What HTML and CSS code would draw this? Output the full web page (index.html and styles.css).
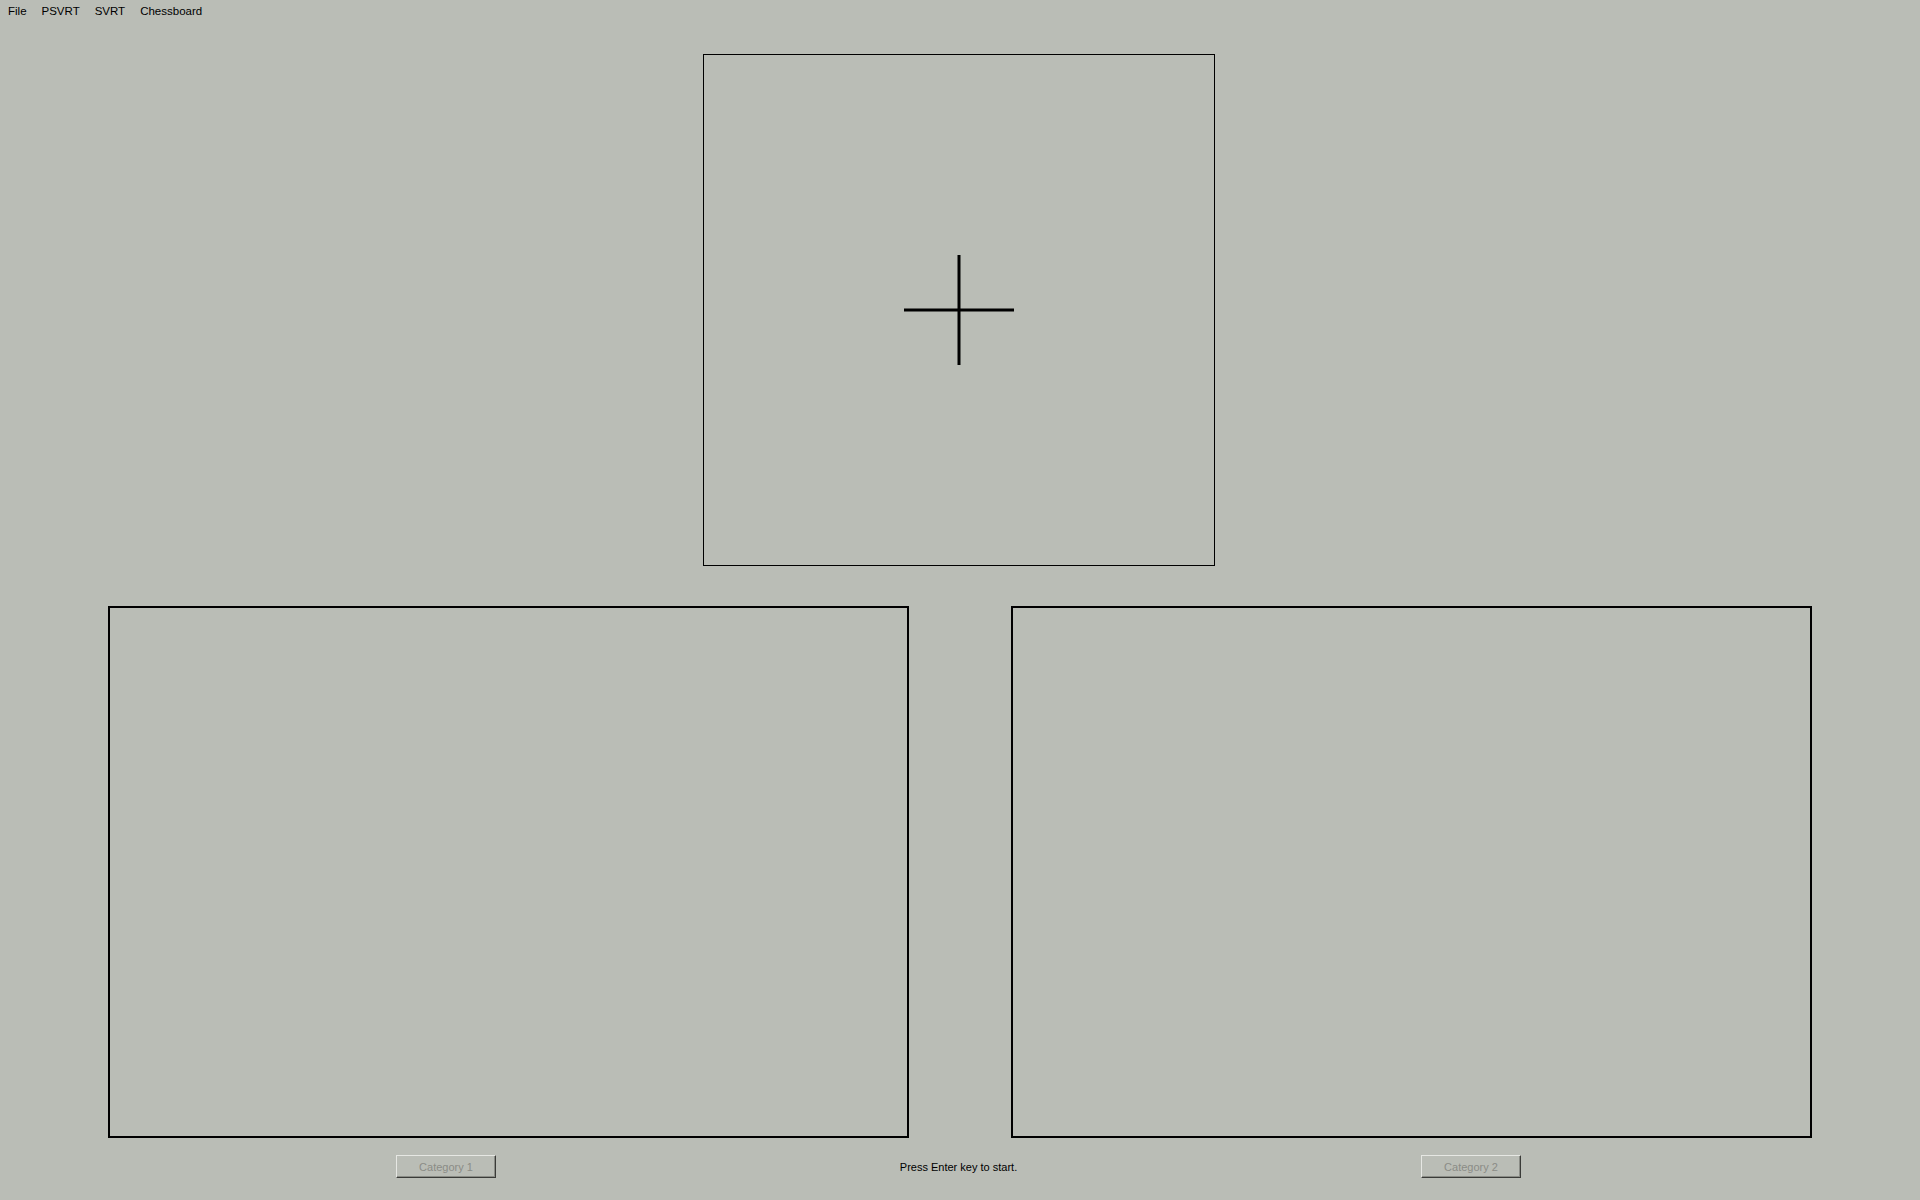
FILE: index.html
```html
<!DOCTYPE html>
<html>
  <head>
    <title>Categorization</title>
    <link rel="stylesheet" href="styles.css">
  </head>
  <body>
    <div class="menubar">
      <span class="menu-item">File</span>
      <span class="menu-item">PSVRT</span>
      <span class="menu-item">SVRT</span>
      <span class="menu-item">Chessboard</span>
    </div>

    <div class="stimulus-row">
      <div class="stimulus">
        <svg class="fixation" width="110" height="110" viewBox="0 0 110 110">
          <line x1="0" y1="55" x2="110" y2="55" stroke="#000" stroke-width="3" />
          <line x1="55" y1="0" x2="55" y2="110" stroke="#000" stroke-width="3" />
        </svg>
      </div>
    </div>

    <div class="examples-row">
      <div class="examples"></div>
      <div class="examples"></div>
    </div>

    <div class="controls">
      <button class="category" disabled>Category 1</button>
      <span class="status">Press Enter key to start.</span>
      <button class="category" disabled>Category 2</button>
    </div>
  </body>
</html>
```

FILE: styles.css
```css
body {
  margin: 0;
  background-color: #babdb6;
  font-family: "Liberation Sans", Arial, sans-serif;
  font-size: 11px;
  color: #000;
  height: 1200px;
  overflow: hidden;
}
.menubar {
  display: flex;
  height: 20px;
  align-items: center;
  padding-left: 8px;
  padding-top: 1px;
  gap: 15px;
  font-size: 11.5px;
}
.menu-item {
  line-height: 20px;
}
.stimulus-row {
  display: flex;
  justify-content: center;
  margin-top: 33px;
  padding-right: 2px;
}
.stimulus {
  width: 510px;
  height: 510px;
  border: 1px solid #000;
  display: flex;
  align-items: center;
  justify-content: center;
}
.fixation {
  display: block;
  margin-left: -1px;
}
.examples-row {
  display: flex;
  gap: 102px;
  padding: 0 108px;
  margin-top: 40px;
}
.examples {
  width: 797px;
  height: 528px;
  border: 2px solid #000;
}
.controls {
  display: flex;
  justify-content: space-between;
  align-items: center;
  padding: 0 399px 0 396px;
  margin-top: 17px;
}
.category {
  width: 100px;
  height: 23px;
  padding: 0;
  font-family: "Liberation Sans", Arial, sans-serif;
  font-size: 11px;
  color: #8a8c86;
  background-color: #babdb6;
  border: 1px solid;
  border-color: #e6e7e3 #3a3b38 #3a3b38 #e6e7e3;
  box-shadow: inset -1px -1px 0 #8a8c86;
}
.status {
  font-size: 11px;
}
```
